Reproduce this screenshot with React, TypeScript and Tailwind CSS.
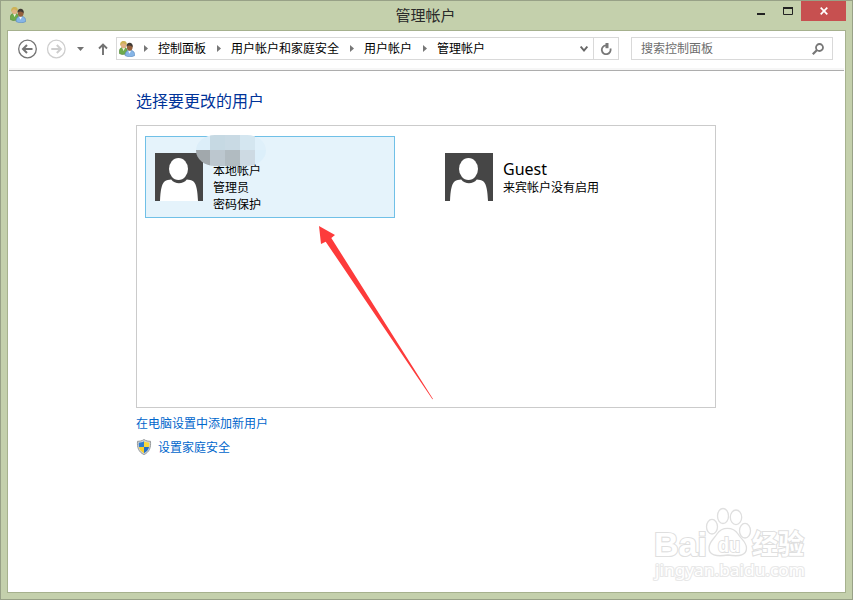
import React from 'react';

const crumbs = [
  { label: '控制面板', width: 'w-[73px]' },
  { label: '用户帐户和家庭安全', width: 'w-[133px]' },
  { label: '用户帐户', width: 'w-[73px]' },
  { label: '管理帐户', width: 'w-[73px]' },
];

const mosaic = ['#dceef9', '#c6d9e3', '#c9dae4', '#d4e6f0', '#dff0fa', '#a1a8ac', '#bcc7cf', '#b1bbc1', '#cddae3', '#dceffa'];

const UsersIcon = () => (
  <svg className="h-4 w-4 shrink-0" viewBox="0 0 16 16">
    <path d="M0.3 12.5C0 8.5 1.2 6.3 4.5 6.3S8.500 8.500 8.500 13L3 13.500Z" fill="#6dab4c" stroke="#52853a" strokeWidth=".6" />
    <path d="M3.200 7L4.600 10L6 7Z" fill="#eef6e9" />
    <ellipse cx="4.600" cy="3.900" rx="2.700" ry="3.300" fill="#dfb183" />
    <path d="M1.300 5C.7 1.500 2.300 0 4.800 .1S8.200 2 7.600 4C6 3 4.800 2.200 3 2.600Z" fill="#cdb356" />
    <path d="M6 14.500C6 11 7.800 9.300 11 9.300S16 11.300 15.800 14.500C13 16.200 9 16.200 6 14.500Z" fill="#86b5e6" stroke="#5888bb" strokeWidth=".6" />
    <path d="M9 9.500L10.500 12.800L12.200 9.500Z" fill="#f1f7fd" />
    <ellipse cx="10.700" cy="6.100" rx="2.900" ry="3.700" fill="#95603c" />
    <path d="M7.500 5.500C7.200 3 9 1.500 11 1.700S14.200 4 13.500 6.500C12.500 4.300 10 3.800 7.500 5.500Z" fill="#403a34" />
  </svg>
);

const Avatar = () => (
  <svg className="h-12 w-12 shrink-0" viewBox="0 0 48 48">
    <path d="M0 0H48V48H0Z" fill="#464646" />
    <path d="M5 48C5.500 38 6.500 31 9.500 28.500C11.500 26.800 14 27.200 16.200 26.500C20 31.500 28 31.500 31.800 26.500C34 27.200 36.500 26.800 38.500 28.500C41.500 31 42.500 38 43 48Z" fill="#fff" />
    <ellipse cx="23.500" cy="16" rx="9.500" ry="11" fill="#fff" />
  </svg>
);

const ShieldIcon = () => (
  <svg className="-mt-[2px] h-4 w-4 shrink-0" viewBox="0 0 16 16">
    <path d="M8 .5C10 2 12.500 2.300 14.500 2.300C15 8.500 13.500 13 8 15.600C2.500 13 1 8.500 1.500 2.300C3.500 2.300 6 2 8 .5Z" fill="#d2d5d4" stroke="#8d9294" strokeWidth=".9" />
    <path d="M8 2.300V8H3C2.700 6.500 2.700 5 2.800 3.700C4.600 3.600 6.500 3.300 8 2.300Z" fill="#2d7cd1" />
    <path d="M8 2.300V8H13C13.300 6.500 13.300 5 13.200 3.700C11.400 3.600 9.500 3.300 8 2.300Z" fill="#f8d83b" />
    <path d="M3 8H8V14.200C5 12.500 3.500 10.500 3 8Z" fill="#f8cf28" />
    <path d="M13 8H8V14.200C11 12.500 12.500 10.500 13 8Z" fill="#236fc5" />
  </svg>
);

const TitleBar = () => (
  <div className="relative flex h-[29px] shrink-0 items-center justify-center">
    <div className="absolute left-[9px] top-[6px]"><UsersIcon /></div>
    <h1 className="mr-[2px] text-[15px] leading-[29px] text-[#2a2a2a]">管理帐户</h1>
    <div className="absolute right-[6px] top-0 flex h-5">
      <svg className="h-5 w-[54px]" viewBox="0 0 54 20">
        <path d="M10 12H18V14H10Z" fill="#222" />
        <path d="M36.500 7V13.500H45.500V7" fill="none" stroke="#222" />
        <path d="M36 6H46V8H36Z" fill="#222" />
      </svg>
      <button className="flex h-5 w-[45px] items-center justify-center bg-[#c75050]">
        <svg className="h-2 w-2" viewBox="0 0 8 8">
          <path d="M.7 .7L7.300 7.300M7.300 .7L.7 7.300" stroke="#fff" strokeWidth="1.700" />
        </svg>
      </button>
    </div>
  </div>
);

const NavBar = () => (
  <div className="flex h-10 shrink-0 flex-col">
    <div className="flex h-9 items-start pl-[9px] pr-[11px] pt-[6px]">
      <svg className="mt-px h-[22px] w-[99px] shrink-0" viewBox="0 0 99 22" fill="none">
        <circle cx="10.500" cy="11" r="8.800" stroke="#747474" strokeWidth="1.300" />
        <path d="M15.500 11H6.500M10 7L6 11L10 15" stroke="#747474" strokeWidth="2" />
        <circle cx="39.300" cy="11" r="8.800" stroke="#cecece" strokeWidth="1.300" />
        <path d="M34.300 11H43.300M39.800 7L43.800 11L39.800 15" stroke="#cecece" strokeWidth="2" />
        <path d="M60 9H67L63.500 13Z" fill="#727272" />
        <path d="M86 17V7M82 10.500L86 6.500L90 10.500" stroke="#727272" strokeWidth="1.900" />
      </svg>
      <div className="flex h-[23px] w-[503px] items-center border border-[#d9d9d9] pl-[2px]">
        <UsersIcon />
        <div className="flex flex-1 pl-[9px]">
          {crumbs.map((crumb) => (
            <div key={crumb.label} className={`flex items-center ${crumb.width}`}>
              <svg className="mr-[10px] h-[7px] w-1 shrink-0" viewBox="0 0 4 7">
                <path d="M0 0L4 3.500L0 7Z" fill="#777" />
              </svg>
              <span className="whitespace-nowrap text-xs leading-[21px] text-black">{crumb.label}</span>
            </div>
          ))}
        </div>
        <svg className="mr-[5px] h-2 w-2" viewBox="0 0 8 8" fill="none">
          <path d="M.7 1.500L4 5.500L7.300 1.500" stroke="#666" strokeWidth="1.900" />
        </svg>
        <div className="flex h-full w-[25px] items-center justify-center border-l border-[#d9d9d9]">
          <svg className="h-3 w-3" viewBox="0 0 12 12" fill="none">
            <path d="M10.400 5.500A4.400 4.400 0 1 1 6 2.400" stroke="#777" strokeWidth="1.800" />
            <path d="M5.500 0L8.500 0V5.200H5.500Z" fill="#777" />
          </svg>
        </div>
      </div>
      <div className="ml-3 flex h-[23px] w-[202px] items-center justify-between border border-[#d9d9d9] pl-[9px] pr-2">
        <span className="text-xs leading-[21px] text-[#6d6d6d]">搜索控制面板</span>
        <svg className="h-3 w-3" viewBox="0 0 12 12" fill="none">
          <circle cx="7.500" cy="4.500" r="3.500" stroke="#777" strokeWidth="1.800" />
          <path d="M5 7L.8 11.200" stroke="#777" strokeWidth="2.200" />
        </svg>
      </div>
    </div>
    <div className="ml-px mr-px mt-px h-[3px] border-b border-[#adadad] bg-[#f6f6f6]" />
  </div>
);

const Watermark = () => (
  <svg className="absolute left-[643px] top-[473px] h-[84px] w-[164px]" viewBox="0 0 164 84" fill="#fff" stroke="#dfdfdf" strokeWidth="1.300">
    <g fontFamily="Liberation Sans, Noto Sans CJK SC, sans-serif" fontWeight="700" style={{ paintOrder: 'stroke' }} strokeWidth="2.200">
      <text x="3" y="51.500" fontSize="34" textLength="53" lengthAdjust="spacingAndGlyphs">Bai</text>
      <text x="101" y="50" fontSize="27" textLength="52" lengthAdjust="spacingAndGlyphs">经验</text>
    </g>
    <ellipse cx="61" cy="22.700" rx="5.500" ry="7.300" />
    <ellipse cx="72" cy="12" rx="5.500" ry="7.500" />
    <ellipse cx="85" cy="13.300" rx="5.700" ry="7.300" />
    <ellipse cx="94" cy="26.700" rx="5.500" ry="7.300" />
    <path d="M66 30C71 22.500 82 22.500 87 30C90 35 95.500 38 95.500 44C95.500 51 89 53 77 51C65 53 58 51 58 44C58 38 62 36 66 30Z" />
    <text x="67" y="48" fontFamily="Liberation Sans, sans-serif" fontSize="20" fontWeight="700" textLength="22" lengthAdjust="spacingAndGlyphs" strokeWidth="2" style={{ paintOrder: 'stroke' }}>du</text>
    <text x="4" y="72" fontFamily="Noto Sans, sans-serif" fontSize="17" textLength="150" lengthAdjust="spacingAndGlyphs" stroke="#e8e8e8" strokeWidth="2.200" style={{ paintOrder: 'stroke' }}>jingyan.baidu.com</text>
  </svg>
);

export default function App() {
  return (
    <div className="flex h-[600px] w-[853px] flex-col border border-[#98a187] bg-[#c4d0ac] font-['Noto_Sans','Noto_Sans_CJK_SC',sans-serif]">
      <TitleBar />
      <div className="relative ml-[6px] mr-[6px] flex h-[563px] flex-col overflow-hidden border border-[#a6b18e] bg-white">
        <NavBar />
        <main className="ml-32 flex w-[580px] flex-col">
          <h2 className="mt-[18px] h-9 text-base leading-6 text-[#003399]">选择要更改的用户</h2>
          <div className="relative flex h-[283px] items-start border border-[#cbcbcb] px-2 pt-[10px]">
            <div className="relative flex h-[82px] w-[250px] border border-[#70c0e7] bg-[#e5f3fb] pl-[9px] pt-4">
              <Avatar />
              <div className="ml-[10px] mt-[9px] text-xs leading-[17px] text-black">
                <p>本地帐户</p>
                <p>管理员</p>
                <p>密码保护</p>
              </div>
              <div className="absolute left-[50px] top-[-2px] grid h-[31px] w-[70px] grid-cols-[14px_15px_15px_15px_11px] grid-rows-[15px_16px] overflow-hidden rounded-[22px/18px]">
                {mosaic.map((color, i) => (
                  <span key={i} style={{ backgroundColor: color }} />
                ))}
              </div>
            </div>
            <div className="ml-[50px] mt-[17px] flex">
              <Avatar />
              <div className="ml-[10px] mt-[6px] text-black">
                <p className="text-base leading-5">Guest</p>
                <p className="text-xs leading-[17px]">来宾帐户没有启用</p>
              </div>
            </div>
            <svg className="absolute left-[181px] top-[99px] h-[176px] w-[117px]" viewBox="0 0 117 176">
              <path d="M1 1L17 10L13.300 13L115 174L114.400 174.300L7.700 16.700L3 19Z" fill="#fd3b3b" />
            </svg>
          </div>
          <a className="mt-[7px] text-xs leading-[17px] text-[#0066cc]">在电脑设置中添加新用户</a>
          <div className="mt-[7px] flex items-center">
            <ShieldIcon />
            <a className="ml-[6px] text-xs leading-[17px] text-[#0066cc]">设置家庭安全</a>
          </div>
        </main>
        <Watermark />
      </div>
    </div>
  );
}
